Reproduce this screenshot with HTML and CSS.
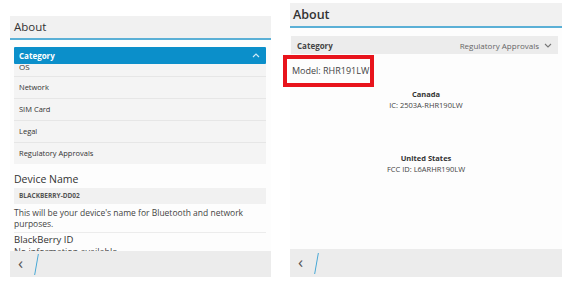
FILE: index.html
```html
<!DOCTYPE html>
<html>
<head>
    <title>About</title>
    <link rel="stylesheet" href="styles.css">
</head>
<body>
    <div class="screen screen-left">
        <div class="header">About</div>
        <div class="content">
            <div class="dropdown open">
                <span>Category</span>
                <svg class="chevron" width="8" height="5" viewBox="0 0 8 5"><path d="M1 4 L4 1 L7 4" fill="none" stroke="#cfe9f6" stroke-width="1.2"/></svg>
            </div>
            <ul class="option-list">
                <li class="first">OS</li>
                <li>Network</li>
                <li>SIM Card</li>
                <li>Legal</li>
                <li>Regulatory Approvals</li>
            </ul>
            <div class="section-title">Device Name</div>
            <div class="text-field">BLACKBERRY-DD02</div>
            <p class="hint">This will be your device's name for Bluetooth and network purposes.</p>
            <div class="divider"></div>
            <div class="section-title small">BlackBerry ID</div>
            <div class="sub">No information available</div>
        </div>
        <div class="action-bar">
            <span class="back">&lsaquo;</span>
            <span class="slash"></span>
        </div>
    </div>

    <div class="screen screen-right">
        <div class="header bold">About</div>
        <div class="content">
            <div class="dropdown closed">
                <span class="label">Category</span>
                <span class="value">Regulatory Approvals</span>
                <svg class="chevron" width="8" height="5" viewBox="0 0 8 5"><path d="M1 1 L4 4 L7 1" fill="none" stroke="#777" stroke-width="1.1"/></svg>
            </div>
            <div class="model">Model: RHR191LW</div>
            <div class="region">
                <div class="country">Canada</div>
                <div class="cert">IC: 2503A-RHR190LW</div>
            </div>
            <div class="region us">
                <div class="country">United States</div>
                <div class="cert">FCC ID: L6ARHR190LW</div>
            </div>
        </div>
        <div class="action-bar">
            <span class="back">&lsaquo;</span>
            <span class="slash"></span>
        </div>
    </div>

    <div class="highlight"></div>
</body>
</html>
```

FILE: styles.css
```css
body {
    margin: 0;
    width: 569px;
    height: 288px;
    background-color: #ffffff;
    font-family: "Open Sans", Arial, sans-serif;
    color: #333;
    display: flex;
    align-items: flex-start;
    position: relative;
    overflow: hidden;
}

.screen {
    display: flex;
    flex-direction: column;
    background-color: #fdfdfd;
}

.screen-left {
    margin-left: 10px;
    margin-top: 16px;
    width: 261px;
    height: 261px;
}

.screen-right {
    margin-left: 19px;
    margin-top: 3px;
    width: 272px;
    height: 274px;
}

.header {
    height: 22px;
    line-height: 22px;
    background-color: #f1f1f1;
    border-bottom: 2px solid #5bb0d6;
    font-size: 11.5px;
    color: #333;
    padding-left: 4px;
    flex-shrink: 0;
}

.header.bold {
    height: 23px;
    line-height: 23px;
    font-size: 12.5px;
    font-weight: 600;
    padding-left: 3px;
}

.content {
    flex: 1;
    overflow: hidden;
}

.screen-left .content {
    padding: 0 5px 0 4px;
}

.dropdown {
    display: flex;
    align-items: center;
    font-size: 8px;
    font-weight: bold;
}

.dropdown.open {
    margin-top: 7px;
    height: 17px;
    background-color: #0b8fca;
    color: #ffffff;
    padding: 0 6px 0 5px;
    border-radius: 1px;
}

.dropdown span {
    flex: 1;
}

.dropdown.closed {
    margin: 8px 4px 0 1px;
    height: 18px;
    background-color: #ececec;
    color: #444;
    padding: 0 6px 0 6px;
}

.dropdown.closed .value {
    flex: none;
    font-weight: normal;
    color: #666;
    margin-right: 5px;
}

.option-list {
    list-style-type: none;
    margin: 0;
    padding: 0;
    background-color: #f4f4f4;
}

.option-list li {
    height: 21px;
    line-height: 21px;
    font-size: 7.5px;
    color: #333;
    padding-left: 5px;
    border-top: 1px solid #e6e6e6;
}

.option-list li.first {
    height: 12px;
    line-height: 5px;
    border-top: none;
    font-size: 8px;
}

.section-title {
    font-size: 10.5px;
    color: #333;
    margin-top: 8px;
    line-height: 14px;
}

.section-title.small {
    font-size: 9.5px;
    margin-top: 1px;
    line-height: 12px;
}

.text-field {
    margin-top: 2px;
    height: 16px;
    line-height: 16px;
    background-color: #f1f1f1;
    font-size: 6.5px;
    font-weight: bold;
    color: #555;
    padding-left: 5px;
}

.hint {
    margin: 3px 0 0 0;
    font-size: 8.5px;
    line-height: 11px;
    color: #444;
}

.divider {
    margin-top: 3px;
    border-top: 1px solid #ececec;
}

.sub {
    font-size: 9px;
    color: #444;
    line-height: 11px;
}

.model {
    font-size: 9px;
    color: #444;
    padding-left: 2px;
    margin-top: 10px;
    line-height: 13px;
}

.region {
    text-align: center;
    margin-top: 12px;
    font-size: 7.5px;
    line-height: 11px;
}

.region.us {
    margin-top: 42px;
}

.country {
    font-weight: bold;
    color: #333;
}

.cert {
    color: #444;
}

.action-bar {
    height: 26px;
    background-color: #ececec;
    display: flex;
    align-items: center;
    flex-shrink: 0;
    position: relative;
}

.screen-right .action-bar {
    height: 28px;
}

.back {
    font-size: 17px;
    color: #555;
    margin-left: 8px;
    line-height: 20px;
    margin-top: -3px;
}

.slash {
    width: 1px;
    height: 21px;
    background-color: #4aa9d6;
    margin-left: 13px;
    transform: skewX(-10deg);
}

.highlight {
    position: absolute;
    left: 283px;
    top: 55px;
    width: 83px;
    height: 24px;
    border: 4px solid #e8141c;
}
```
